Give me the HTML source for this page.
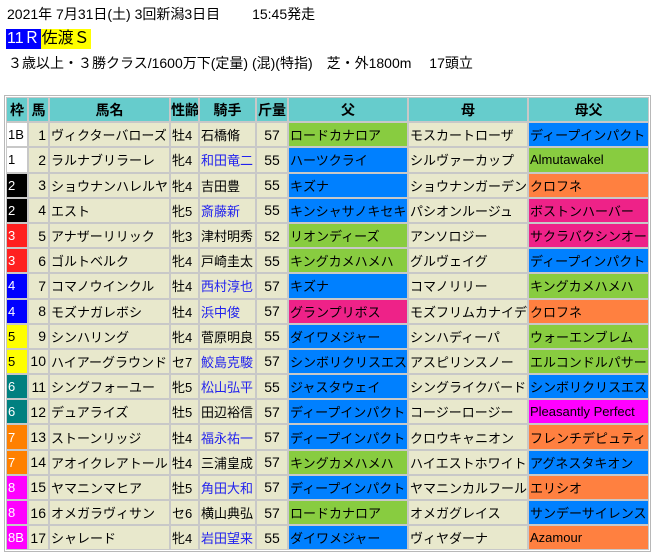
<!DOCTYPE html>
<html><head><meta charset="utf-8"><style>
body{margin:0;background:#fff;font-family:"Liberation Sans","Noto Sans CJK JP",sans-serif;font-size:13px;color:#000;}
.t1{position:absolute;left:7px;top:4px;font-size:14px;white-space:pre;}
.r{position:absolute;left:6px;top:29px;height:20px;line-height:20px;font-size:16px;}
.r span{display:inline-block;padding:0 1px;}
.t3{position:absolute;left:8px;top:53px;white-space:pre;font-size:14px;}
table{position:absolute;left:4px;top:95px;width:647px;table-layout:fixed;border-collapse:separate;border-spacing:2px;border:1px solid #b8b8b8;background:#fff;}
td,th{height:23.2px;box-sizing:border-box;padding:0 0 0 1px;white-space:nowrap;overflow:hidden;font-size:13px;background:#e8e8cc;box-shadow:0 0 0 1px #c8c8c8;}
th{background:#66cccc;text-align:center;font-weight:bold;padding:0;font-size:14px;}
td.n{text-align:right;padding-right:2px;font-size:14px;}
td.c{text-align:center;padding:0;font-size:14px;}
.j{color:#2222ee;}
.g{background:#88cc40}.b{background:#0080ff}.o{background:#ff8040}.p{background:#ee2288}.m{background:#ff00ff}
.w1{background:#fff}.w2{background:#000;color:#fff}.w3{background:#ff2020;color:#fff}.w4{background:#0000ff;color:#fff}.w5{background:#ffff00}.w6{background:#008080;color:#fff}.w7{background:#ff8000;color:#fff}.w8{background:#ff00ff;color:#fff}
</style></head><body>
<div class="t1">2021年 7月31日(土) 3回新潟3日目　　 15:45発走</div>
<div class="r"><span style="background:#0000ff;color:#fff">11Ｒ</span><span style="background:#ffff00">佐渡Ｓ</span></div>
<div class="t3">３歳以上・３勝クラス/1600万下(定量) (混)(特指)　芝・外1800m　 17頭立</div>
<table>
<colgroup><col style="width:20px"><col style="width:19px"><col style="width:119px"><col style="width:27px"><col style="width:55px"><col style="width:30px"><col style="width:118px"><col style="width:118px"><col style="width:119px"></colgroup>
<tr><th>枠</th><th>馬</th><th>馬名</th><th>性齢</th><th>騎手</th><th>斤量</th><th>父</th><th>母</th><th>母父</th></tr>
<tr><td class="w1">1B</td><td class="n">1</td><td>ヴィクターバローズ</td><td>牡4</td><td>石橋脩</td><td class="c">57</td><td class="g">ロードカナロア</td><td>モスカートローザ</td><td class="b">ディープインパクト</td></tr>
<tr><td class="w1">1</td><td class="n">2</td><td>ラルナブリラーレ</td><td>牝4</td><td class="j">和田竜二</td><td class="c">55</td><td class="b">ハーツクライ</td><td>シルヴァーカップ</td><td class="g">Almutawakel</td></tr>
<tr><td class="w2">2</td><td class="n">3</td><td>ショウナンハレルヤ</td><td>牝4</td><td>吉田豊</td><td class="c">55</td><td class="b">キズナ</td><td>ショウナンガーデン</td><td class="o">クロフネ</td></tr>
<tr><td class="w2">2</td><td class="n">4</td><td>エスト</td><td>牝5</td><td class="j">斎藤新</td><td class="c">55</td><td class="b">キンシャサノキセキ</td><td>パシオンルージュ</td><td class="p">ボストンハーバー</td></tr>
<tr><td class="w3">3</td><td class="n">5</td><td>アナザーリリック</td><td>牝3</td><td>津村明秀</td><td class="c">52</td><td class="g">リオンディーズ</td><td>アンソロジー</td><td class="p">サクラバクシンオー</td></tr>
<tr><td class="w3">3</td><td class="n">6</td><td>ゴルトベルク</td><td>牝4</td><td>戸崎圭太</td><td class="c">55</td><td class="g">キングカメハメハ</td><td>グルヴェイグ</td><td class="b">ディープインパクト</td></tr>
<tr><td class="w4">4</td><td class="n">7</td><td>コマノウインクル</td><td>牡4</td><td class="j">西村淳也</td><td class="c">57</td><td class="b">キズナ</td><td>コマノリリー</td><td class="g">キングカメハメハ</td></tr>
<tr><td class="w4">4</td><td class="n">8</td><td>モズナガレボシ</td><td>牡4</td><td class="j">浜中俊</td><td class="c">57</td><td class="p">グランプリボス</td><td>モズフリムカナイデ</td><td class="o">クロフネ</td></tr>
<tr><td class="w5">5</td><td class="n">9</td><td>シンハリング</td><td>牝4</td><td>菅原明良</td><td class="c">55</td><td class="b">ダイワメジャー</td><td>シンハディーパ</td><td class="g">ウォーエンブレム</td></tr>
<tr><td class="w5">5</td><td class="n">10</td><td>ハイアーグラウンド</td><td>セ7</td><td class="j">鮫島克駿</td><td class="c">57</td><td class="b">シンボリクリスエス</td><td>アスピリンスノー</td><td class="g">エルコンドルパサー</td></tr>
<tr><td class="w6">6</td><td class="n">11</td><td>シングフォーユー</td><td>牝5</td><td class="j">松山弘平</td><td class="c">55</td><td class="b">ジャスタウェイ</td><td>シングライクバード</td><td class="b">シンボリクリスエス</td></tr>
<tr><td class="w6">6</td><td class="n">12</td><td>デュアライズ</td><td>牡5</td><td>田辺裕信</td><td class="c">57</td><td class="b">ディープインパクト</td><td>コージーロージー</td><td class="m">Pleasantly Perfect</td></tr>
<tr><td class="w7">7</td><td class="n">13</td><td>ストーンリッジ</td><td>牡4</td><td class="j">福永祐一</td><td class="c">57</td><td class="b">ディープインパクト</td><td>クロウキャニオン</td><td class="o">フレンチデピュティ</td></tr>
<tr><td class="w7">7</td><td class="n">14</td><td>アオイクレアトール</td><td>牡4</td><td>三浦皇成</td><td class="c">57</td><td class="g">キングカメハメハ</td><td>ハイエストホワイト</td><td class="b">アグネスタキオン</td></tr>
<tr><td class="w8">8</td><td class="n">15</td><td>ヤマニンマヒア</td><td>牡5</td><td class="j">角田大和</td><td class="c">57</td><td class="b">ディープインパクト</td><td>ヤマニンカルフール</td><td class="o">エリシオ</td></tr>
<tr><td class="w8">8</td><td class="n">16</td><td>オメガラヴィサン</td><td>セ6</td><td>横山典弘</td><td class="c">57</td><td class="g">ロードカナロア</td><td>オメガグレイス</td><td class="b">サンデーサイレンス</td></tr>
<tr><td class="w8">8B</td><td class="n">17</td><td>シャレード</td><td>牝4</td><td class="j">岩田望来</td><td class="c">55</td><td class="b">ダイワメジャー</td><td>ヴィヤダーナ</td><td class="o">Azamour</td></tr>
</table>
</body></html>
